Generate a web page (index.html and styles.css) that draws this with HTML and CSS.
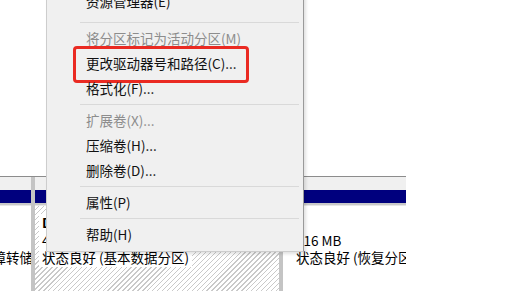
FILE: index.html
```html
<!DOCTYPE html>
<html lang="zh-CN">
<head>
    <meta charset="UTF-8">
    <meta name="viewport" content="width=device-width, initial-scale=1.0">
    <title>磁盘管理</title>
    <link rel="stylesheet" href="styles.css">
</head>
<body>
    <div class="screen">
        <!-- disk row behind the menu -->
        <div class="disk">
            <div class="part part-1">
                <div class="bar"></div>
                <div class="part-body">
                    <div class="label">
                        <div class="line">&nbsp;</div>
                        <div class="line">&nbsp;</div>
                        <div class="line shift">故障转储, 基本数据分区)</div>
                    </div>
                </div>
            </div>
            <div class="part part-2">
                <div class="bar"></div>
                <div class="part-body hatched">
                    <div class="label">
                        <div class="line name">Data (D:)</div>
                        <div class="line">476.44 GB NTFS</div>
                        <div class="line">状态良好 (基本数据分区)</div>
                    </div>
                </div>
            </div>
            <div class="part part-3">
                <div class="bar"></div>
                <div class="part-body">
                    <div class="label">
                        <div class="line">&nbsp;</div>
                        <div class="line">516 MB</div>
                        <div class="line">状态良好 (恢复分区)</div>
                    </div>
                </div>
            </div>
        </div>

        <!-- right click menu -->
        <div class="context-menu">
            <div class="menu-item first">资源管理器(E)</div>
            <div class="menu-sep"></div>
            <div class="menu-item disabled">将分区标记为活动分区(M)</div>
            <div class="menu-item highlight">更改驱动器号和路径(C)...</div>
            <div class="menu-item">格式化(F)...</div>
            <div class="menu-sep"></div>
            <div class="menu-item disabled">扩展卷(X)...</div>
            <div class="menu-item">压缩卷(H)...</div>
            <div class="menu-item">删除卷(D)...</div>
            <div class="menu-sep"></div>
            <div class="menu-item">属性(P)</div>
            <div class="menu-sep"></div>
            <div class="menu-item">帮助(H)</div>
        </div>
    </div>
</body>
</html>
```

FILE: styles.css
```css
* {
    margin: 0;
    padding: 0;
    box-sizing: border-box;
}

body {
    font-family: "Noto Sans CJK SC", "Microsoft YaHei", sans-serif;
    font-size: 13.5px;
    color: #000;
    background: #fff;
}

.screen {
    position: relative;
    width: 516px;
    height: 291px;
    overflow: hidden;
    background: #fff;
}

/* disk row */
.disk {
    display: flex;
    gap: 4px;
    width: 406px;
    height: 115px;
    margin-top: 176px;
    background: #c4c4c4;
    border-top: 1px solid #8c8c8c;
}

.part {
    display: flex;
    flex-direction: column;
    padding-top: 13px;
    background: #f0f0f0;
    overflow: hidden;
}

.part-1 {
    width: 31px;
}

.part-2 {
    width: 244px;
}

.part-3 {
    flex: 1;
}

.bar {
    height: 15px;
    background: #00007e;
    border-bottom: 2px solid #c9c9c9;
}

.part-body {
    flex: 1;
    background: #fff;
    border-top: 1px solid #e6e6e6;
    padding: 8px 0 0 4px;
}

.hatched {
    background: repeating-linear-gradient(135deg, #fff 0 2.5px, #c9c9c9 2.5px 3.5px);
}

.part-3 .part-body {
    padding-left: 10px;
}

.label {
    width: max-content;
    background: #fff;
    padding: 0 3px;
}

.line {
    height: 17.5px;
    line-height: 17.5px;
    white-space: nowrap;
}

.name {
    font-weight: bold;
}

.shift {
    margin-left: -28px;
}

/* context menu */
.context-menu {
    position: absolute;
    left: 46px;
    top: -9px;
    width: 258px;
    background: #f0f0f0;
    border: 1px solid #cdcdcd;
    border-right-color: #9a9a9a;
    padding: 2px 0 4px;
    box-shadow: 2px 2px 3px rgba(0,0,0,0.12);
}

.menu-item {
    position: relative;
    height: 25px;
    line-height: 25px;
    padding-left: 39px;
    white-space: nowrap;
    color: #111;
}

.menu-item.first {
    line-height: 15px;
}

.menu-item.disabled {
    color: #8d8d8d;
}

.menu-sep {
    height: 1px;
    margin: 3px 4px 3px 33px;
    background: #d9d9d9;
}

.highlight::after {
    content: "";
    position: absolute;
    left: 26px;
    top: -5px;
    width: 170px;
    height: 31px;
    border: 3px solid #ea2a22;
    border-radius: 4px;
}
```
